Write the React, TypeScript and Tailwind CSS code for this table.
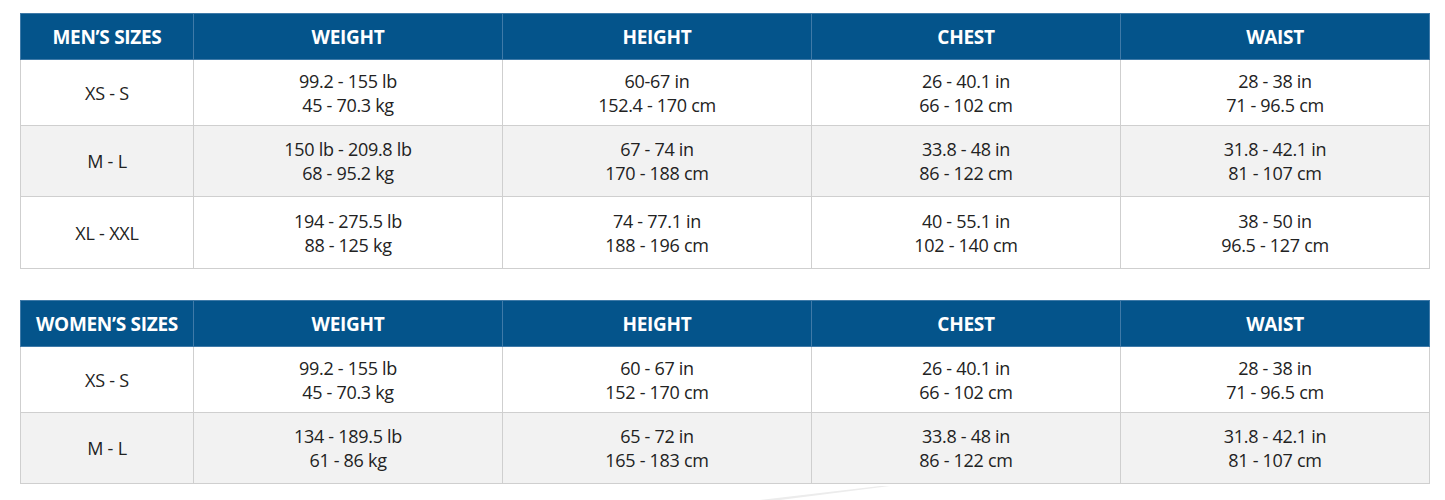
const cols = ["WEIGHT", "HEIGHT", "CHEST", "WAIST"];

type Row = { size: string; cells: [string, string][] };

const men: Row[] = [
  {
    size: "XS - S",
    cells: [
      ["99.2 - 155 lb", "45 - 70.3 kg"],
      ["60-67 in", "152.4 - 170 cm"],
      ["26 - 40.1 in", "66 - 102 cm"],
      ["28 - 38 in", "71 - 96.5 cm"],
    ],
  },
  {
    size: "M - L",
    cells: [
      ["150 lb - 209.8 lb", "68 - 95.2 kg"],
      ["67 - 74 in", "170 - 188 cm"],
      ["33.8 - 48 in", "86 - 122 cm"],
      ["31.8 - 42.1 in", "81 - 107 cm"],
    ],
  },
  {
    size: "XL - XXL",
    cells: [
      ["194 - 275.5 lb", "88 - 125 kg"],
      ["74 - 77.1 in", "188 - 196 cm"],
      ["40 - 55.1 in", "102 - 140 cm"],
      ["38 - 50 in", "96.5 - 127 cm"],
    ],
  },
];

const women: Row[] = [
  {
    size: "XS - S",
    cells: [
      ["99.2 - 155 lb", "45 - 70.3 kg"],
      ["60 - 67 in", "152 - 170 cm"],
      ["26 - 40.1 in", "66 - 102 cm"],
      ["28 - 38 in", "71 - 96.5 cm"],
    ],
  },
  {
    size: "M - L",
    cells: [
      ["134 - 189.5 lb", "61 - 86 kg"],
      ["65 - 72 in", "165 - 183 cm"],
      ["33.8 - 48 in", "86 - 122 cm"],
      ["31.8 - 42.1 in", "81 - 107 cm"],
    ],
  },
];

const heights = ["h-[66px]", "h-[71px]", "h-[72px]"];

function SizeTable({ title, rows }: { title: string; rows: Row[] }) {
  return (
    <table className="w-[1409px] table-fixed border-collapse text-[18px] leading-[24px] text-[#222]">
      <colgroup>
        <col className="w-[173px]" />
        <col className="w-[309px]" />
        <col className="w-[309px]" />
        <col className="w-[309px]" />
        <col className="w-[309px]" />
      </colgroup>
      <thead>
        <tr className="h-[46px] bg-[#04548b] text-[19px] text-white">
          <th className="border border-[#3f7aa8] font-bold tracking-[-0.3px]">{title}</th>
          {cols.map((c) => (
            <th key={c} className="border border-[#3f7aa8] font-bold tracking-[-0.3px]">
              {c}
            </th>
          ))}
        </tr>
      </thead>
      <tbody>
        {rows.map((r, i) => (
          <tr key={i} className={`${heights[i]} ${i % 2 === 1 ? "bg-[#f2f2f2]" : "bg-white"}`}>
            <td className="border border-[#cfcfcf] text-center tracking-[-0.2px]">{r.size}</td>
            {r.cells.map((c, j) => (
              <td key={j} className="border border-[#cfcfcf] text-center tracking-[-0.3px]">
                <div>{c[0]}</div>
                <div>{c[1]}</div>
              </td>
            ))}
          </tr>
        ))}
      </tbody>
    </table>
  );
}

export default function App() {
  return (
    <div className="relative h-[500px] w-[1445px] overflow-hidden bg-white font-['Open_Sans',sans-serif]">
      <div className="flex flex-col gap-[31px] pl-[20px] pt-[13px]">
        <SizeTable title="MEN’S SIZES" rows={men} />
        <SizeTable title="WOMEN’S SIZES" rows={women} />
      </div>
      <svg className="absolute left-[740px] top-[486px]" width="150" height="14" viewBox="0 0 150 14">
        <polygon points="20,14 140,0 150,0 40,14" fill="#ececec" />
      </svg>
    </div>
  );
}
